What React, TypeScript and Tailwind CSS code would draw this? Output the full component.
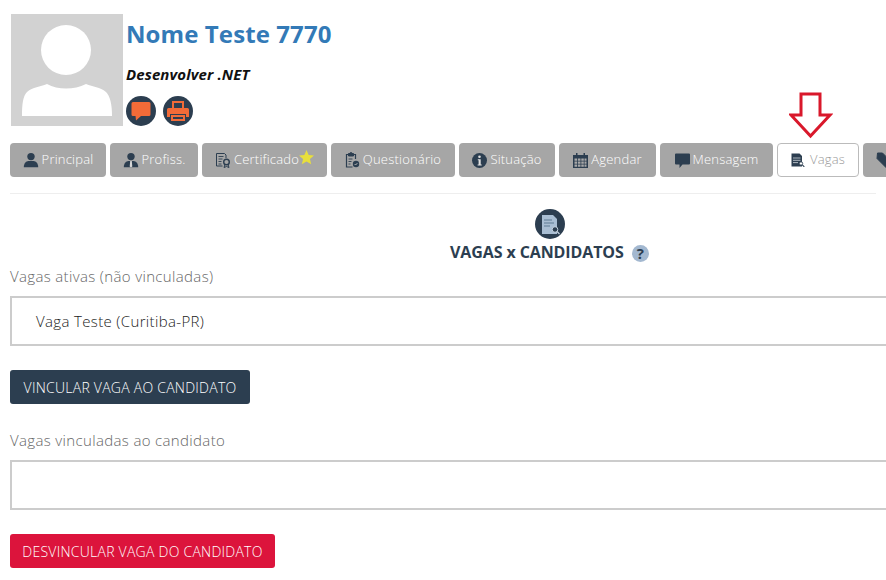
import React from "react";

const navy = "#2c3e50";

function UserIcon({ tie }: { tie?: boolean }) {
  return (
    <svg width="16" height="16" viewBox="0 0 16 16" className="shrink-0">
      <circle cx="8" cy="4.6" r="3.7" fill={navy} />
      <path d="M0.8 15.2c0-3.8 2.2-6 4.6-6.2h5.2c2.4.2 4.6 2.4 4.6 6.2z" fill={navy} />
      {tie && <path d="M7.2 9h1.6l.5 5.5-1.3 1-1.3-1z" fill="#d8d8d8" />}
    </svg>
  );
}
function CertIcon() {
  return (
    <svg width="16" height="16" viewBox="0 0 16 16" className="shrink-0" fill="none" stroke={navy}>
      <path d="M1.5 1.5h8l1.5 1.5v3M1.5 1.5v12.5h6" />
      <path d="M3.5 4.5h5M3.5 7h4M3.5 9.500h3M3.500 12h3" strokeWidth=".9" />
      <circle cx="11.500" cy="10" r="2.800" strokeWidth="1.400" />
      <path d="M10 12.500l-1 3 2.500-1 2.500 1-1-3" strokeWidth="1" />
    </svg>
  );
}
function ClipIcon() {
  return (
    <svg width="15" height="16" viewBox="0 0 15 16" className="shrink-0" fill="none" stroke={navy}>
      <path d="M3 2.500H1.500v12.500h6M9 2.500h1.500V7" strokeWidth="1.200" />
      <path d="M3.500 1.500h1.500a1 1 0 0 1 2 0h1.500v2.500h-5z" fill={navy} />
      <path d="M3.500 7h4M3.500 9.500h3M3.500 12h2" strokeWidth=".9" />
      <circle cx="11" cy="12" r="3.200" fill={navy} stroke="none" />
      <path d="M9.600 12l1 1 1.800-1.900" stroke="#bbb" strokeWidth=".9" />
    </svg>
  );
}
function InfoIcon() {
  return (
    <svg width="15" height="15" viewBox="0 0 15 15" className="shrink-0">
      <circle cx="7.500" cy="7.500" r="7.500" fill={navy} />
      <circle cx="7.500" cy="3.800" r="1.300" fill="#e0e0e0" />
      <path d="M5.800 6.200h2.900v5.200h1v1.100H5.600v-1.100h1V7.300h-.8z" fill="#e0e0e0" />
    </svg>
  );
}
function CalIcon() {
  return (
    <svg width="15" height="15" viewBox="0 0 15 15" className="shrink-0">
      <path d="M0 2h15v13H0z" fill={navy} />
      <path d="M3 0h1.500v3H3zM10.500 0H12v3h-1.500z" fill={navy} />
      <path d="M1.500 5.500h2.700v2.300H1.500zM5 5.500h2.500v2.300H5zM8.300 5.500h2.500v2.300H8.300zM11.500 5.500h2v2.300h-2zM1.500 8.500h2.700v2.300H1.500zM5 8.500h2.500v2.300H5zM8.300 8.500h2.500v2.300H8.300zM11.500 8.500h2v2.300h-2zM1.500 11.500h2.700v2.300H1.500zM5 11.500h2.500v2.300H5zM8.300 11.500h2.500v2.300H8.300zM11.500 11.500h2v2.300h-2z" fill="#a8a8a8" />
    </svg>
  );
}
function MsgIcon() {
  return (
    <svg width="15" height="15" viewBox="0 0 15 15" className="shrink-0">
      <path d="M1 .5h13a1 1 0 0 1 1 1v9a1 1 0 0 1-1 1H7.500L4.500 15v-3.500H1a1 1 0 0 1-1-1v-9a1 1 0 0 1 1-1z" fill={navy} />
    </svg>
  );
}
function DocSearch({ size = 14 }: { size?: number }) {
  return (
    <svg width={size} height={size} viewBox="0 0 14 14" className="shrink-0">
      <path d="M0.500 0.500h8l2.500 2.500v10.500H0.500z" fill={navy} />
      <path d="M2 5h7.500M2 7.300h7.500M2 9.600h5" stroke="#cfd6dc" strokeWidth=".8" />
      <circle cx="10" cy="10.500" r="1.700" fill="#fff" stroke={navy} strokeWidth=".9" />
      <path d="M11.300 11.800l2 2" stroke={navy} strokeWidth="1.100" />
    </svg>
  );
}

const tabs = [
  { label: "Principal", w: "w-[96px]", icon: <UserIcon /> },
  { label: "Profiss.", w: "w-[88px]", icon: <UserIcon tie /> },
  {
    label: "Certificado",
    w: "w-[125px]",
    icon: <CertIcon />,
    star: true,
  },
  { label: "Questionário", w: "w-[124px]", icon: <ClipIcon /> },
  { label: "Situação", w: "w-[96px]", icon: <InfoIcon /> },
  { label: "Agendar", w: "w-[97px]", icon: <CalIcon /> },
  { label: "Mensagem", w: "w-[113px]", icon: <MsgIcon /> },
];

export default function App() {
  return (
    <div className="relative h-[580px] w-[886px] overflow-hidden bg-white font-['Open_Sans',sans-serif] text-[#333]">
      <div className="flex h-[143px] pl-[11px] pt-[14px]">
        <div className="relative h-[112px] w-[112px] shrink-0 overflow-hidden bg-[#d2d2d2]">
          <svg viewBox="0 0 112 112" className="h-full w-full">
            <circle cx="55" cy="36" r="25" fill="#fff" />
            <path d="M11 102c0-12 1-20 5-24 6-5 13-5 20-8 11 6 27 6 39 0 7 3 14 3 20 8 4 4 6 12 6 24z" fill="#fff" />
          </svg>
        </div>
        <div className="ml-[3px] flex flex-col">
          <h1 className="text-[24px] leading-[40px] font-bold tracking-[0.1px] text-[#337ab7]">Nome Teste 7770</h1>
          <div className="mt-[10px] text-[15px] leading-[20px] font-bold tracking-[0.1px] text-[#111] italic">Desenvolver .NET</div>
          <div className="mt-[12px] flex gap-[7px]">
            <div className="flex h-[30px] w-[30px] items-center justify-center rounded-full bg-[#2c3e50]">
              <svg width="20" height="20" viewBox="0 0 20 20">
                <path d="M2 1h16a1.500 1.500 0 0 1 1.500 1.500v11A1.500 1.500 0 0 1 18 15h-8l-5 4.500-.5-4.500H2A1.500 1.500 0 0 1 .5 13.500v-11A1.500 1.500 0 0 1 2 1z" fill="#f26b38" />
              </svg>
            </div>
            <div className="flex h-[30px] w-[30px] items-center justify-center rounded-full bg-[#2c3e50]">
              <svg width="22" height="20" viewBox="0 0 22 20">
                <path d="M5 0h12v8H5z" fill="#f26b38" />
                <path d="M7 2h8v6H7z" fill="#2c3e50" />
                <path d="M1.500 7H20.500a1.500 1.500 0 0 1 1.500 1.500V16h-3v-3H3v3H0V8.500A1.500 1.500 0 0 1 1.500 7z" fill="#f26b38" />
                <path d="M4 14h14v6H4z" fill="#f26b38" />
                <path d="M6 16h10v2H6z" fill="#2c3e50" />
              </svg>
            </div>
          </div>
        </div>
      </div>

      <div className="ml-[10px] flex gap-[4px]">
        {tabs.map((t) => (
          <div
            key={t.label}
            className={`relative flex h-[34px] shrink-0 items-center justify-center gap-[3px] rounded-[4px] bg-[#a6a6a6] text-[13px] font-light tracking-[0.2px] text-white ${t.w}`}
          >
            {t.icon}
            <span>{t.label}</span>
            {t.star && (
              <svg width="15" height="15" viewBox="0 0 14 14" className="-ml-[3px] -mt-[6px] shrink-0">
                <path d="M7 0l2 4.700 5 .4-3.800 3.300 1.200 5L7 10.700l-4.400 2.700 1.200-5L0 5.100l5-.4z" fill="#e8df3c" />
              </svg>
            )}
          </div>
        ))}
        <div className="flex h-[34px] w-[82px] shrink-0 items-center justify-center gap-[5px] rounded-[4px] border border-[#bbb] bg-white text-[13px] font-light tracking-[0.2px] text-[#999]">
          <DocSearch />
          <span>Vagas</span>
        </div>
        <div className="flex h-[34px] w-[60px] shrink-0 items-center rounded-[4px] bg-[#a6a6a6] pl-[13px]">
          <svg width="16" height="16" viewBox="0 0 16 16">
            <path d="M1.500 1h5l9 9-5.500 5.500-9-9z" fill={navy} stroke={navy} strokeLinejoin="round" />
          </svg>
        </div>
      </div>

      <div className="mx-[10px] mt-[16px] h-px bg-[#eee]" />

      <div className="mt-[15px] flex w-[1100px] flex-col items-center">
        <div className="flex h-[30px] w-[30px] items-center justify-center rounded-full bg-[#2c3e50]">
          <svg width="19" height="21" viewBox="0 0 19 21">
            <path d="M1 1h11l4 4v15H1z" fill="#a9bed3" />
            <path d="M3 6h8M3 9h10M3 12h6" stroke="#5f7a94" strokeWidth="1.200" />
            <circle cx="14" cy="15.500" r="2.800" fill="#2c3e50" stroke="#c6d3e0" strokeWidth="1" />
            <path d="M16 17.500l2.500 2.500" stroke="#c6d3e0" strokeWidth="1.300" />
          </svg>
        </div>
      </div>
      <div className="mt-[3px] flex h-[20px] items-center pl-[450px]">
        <span className="text-[16px] leading-[20px] font-bold tracking-[-0.1px] text-[#2c3e50]">VAGAS x CANDIDATOS</span>
        <span className="mt-[2px] ml-[8px] flex h-[17px] w-[17px] items-center justify-center rounded-full bg-[#a3b8d0] text-[15px] leading-none font-bold text-[#2c3e50]">?</span>
      </div>

      <div className="mt-[4px] pl-[10px] text-[15px] leading-[20px] font-light tracking-[0.35px] text-[#666]">Vagas ativas (não vinculadas)</div>

      <div className="mt-[10px] ml-[10px] flex h-[50px] w-[900px] items-center border-2 border-[#ccc] pl-[24px] text-[15px] font-light tracking-[0.35px] text-[#222]">
        Vaga Teste (Curitiba-PR)
      </div>

      <div className="mt-[24px] ml-[10px] flex h-[34px] w-[240px] items-center justify-center rounded-[3px] bg-[#2c3e50] text-[14px] font-light tracking-[0.25px] text-white">
        VINCULAR VAGA AO CANDIDATO
      </div>

      <div className="mt-[26px] pl-[10px] text-[15px] leading-[20px] font-light tracking-[0.35px] text-[#666]">Vagas vinculadas ao candidato</div>

      <div className="mt-[10px] ml-[10px] h-[50px] w-[900px] border-2 border-[#ccc]" />

      <div className="mt-[24px] ml-[10px] flex h-[34px] w-[265px] items-center justify-center rounded-[3px] bg-[#dc143c] text-[14px] font-light tracking-[0.25px] text-white">
        DESVINCULAR VAGA DO CANDIDATO
      </div>

      <svg width="44" height="48" viewBox="0 0 44 48" className="absolute left-[789px] top-[92px]">
        <path d="M12 2h19v21h10L21.500 44 2 23h10z" fill="#fff" stroke="#d9182b" strokeWidth="3" />
      </svg>
    </div>
  );
}
